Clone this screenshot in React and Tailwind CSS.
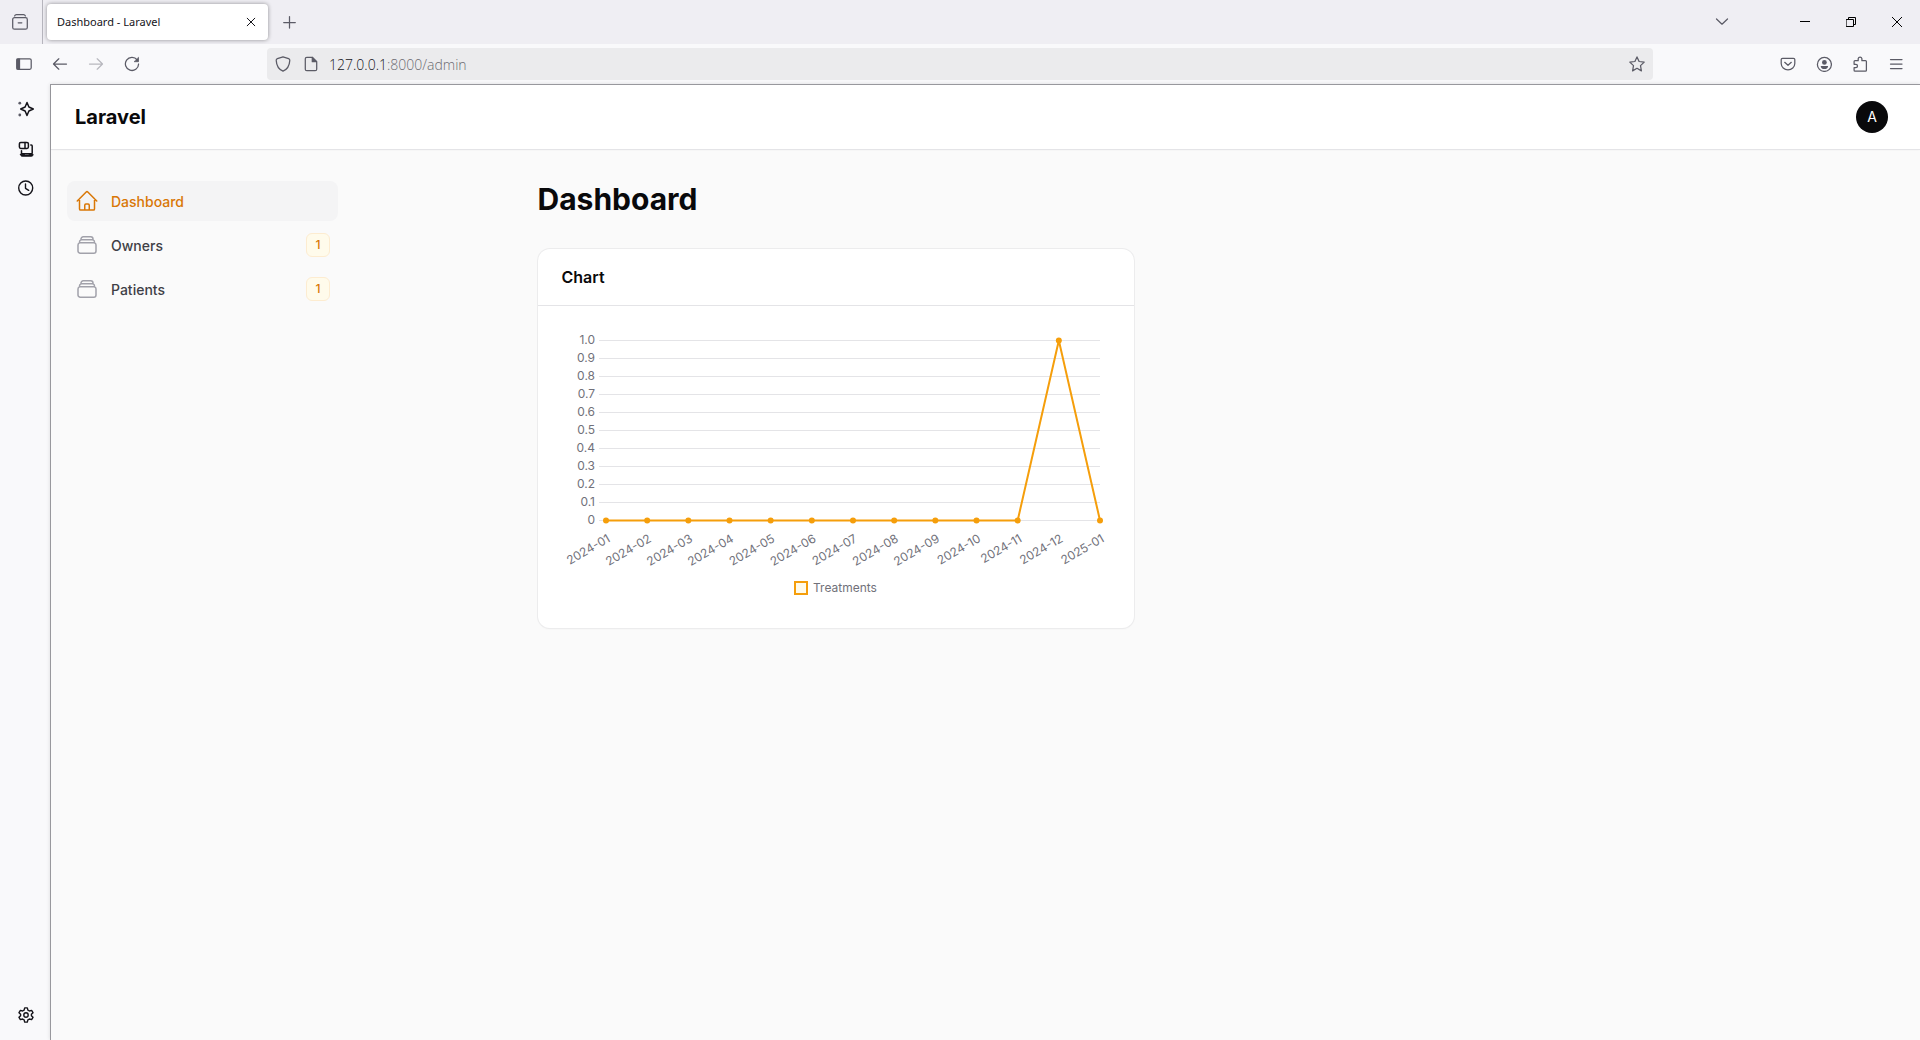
import React from "react";

function Icon({ children, className = "size-4", box = "0 0 16 16", strokeWidth = 1.25 }) {
  return (
    <svg
      viewBox={box}
      className={className}
      fill="none"
      stroke="currentColor"
      strokeWidth={strokeWidth}
      strokeLinecap="round"
      strokeLinejoin="round"
      aria-hidden="true"
    >
      {children}
    </svg>
  );
}

function TabStrip() {
  return (
    <div className="flex h-11 items-center bg-[#efeef3] text-[#5b5b66]">
      <div className="flex h-full w-[43px] items-center border-r border-[#b6b5bd] pl-3">
        <button aria-label="Firefox View" className="grid size-4 place-items-center">
          <Icon>
            <path d="M2.6 1.9C3 1 3.6.7 4.4.7h7.2c.8 0 1.4.3 1.8 1.2" />
            <rect x=".7" y="3.7" width="14.6" height="11.5" rx="1.8" />
            <path d="M6.2 8.8h3.6" />
          </Icon>
        </button>
      </div>
      <div className="ml-1 flex h-9 w-[221px] items-center justify-between rounded bg-white pr-[9px] pl-[10px] shadow-[0_0_4px_rgba(0,0,0,0.4)]">
        <span className="font-['Noto_Sans',sans-serif] text-[11px] text-[#15141a]">Dashboard - Laravel</span>
        <button aria-label="Close tab" className="grid size-4 place-items-center text-[#15141a]">
          <Icon className="size-[10px]" box="0 0 10 10" strokeWidth={1}>
            <path d="m1.200 1.200 7.600 7.600M8.800 1.200 1.200 8.800" />
          </Icon>
        </button>
      </div>
      <button aria-label="New tab" className="ml-[13px] grid size-4 place-items-center">
        <Icon>
          <path d="M8.500 2.500v11.500M2.700 8.500h11.600" />
        </Icon>
      </button>
      <div className="grow" />
      <button aria-label="List all tabs" className="mr-[52px] grid size-4 place-items-center">
        <Icon>
          <path d="m2.500 5 5.500 5.200L13.500 5" />
        </Icon>
      </button>
      <div className="flex text-black">
        <button aria-label="Minimize" className="grid h-11 w-[46px] place-items-center">
          <Icon className="size-[10px]" box="0 0 10 10" strokeWidth={1}>
            <path d="M0 4.500h10" />
          </Icon>
        </button>
        <button aria-label="Restore" className="grid h-11 w-[46px] place-items-center">
          <Icon className="size-[10px]" box="0 0 10 10" strokeWidth={1}>
            <path d="M.5 2.500h7v7h-7zM2.500 2.500v-2h7v7h-2" />
          </Icon>
        </button>
        <button aria-label="Close window" className="grid h-11 w-[46px] place-items-center">
          <Icon className="size-[10px]" box="0 0 10 10" strokeWidth={1}>
            <path d="m.3.3 9.400 9.400M9.700.3.3 9.700" />
          </Icon>
        </button>
      </div>
    </div>
  );
}

function ToolButton({ label, children, muted }) {
  return (
    <button
      aria-label={label}
      className={muted ? "grid h-10 w-9 place-items-center text-[#b8b8be]" : "grid h-10 w-9 place-items-center text-[#5b5b66]"}
    >
      <Icon>{children}</Icon>
    </button>
  );
}

function Toolbar() {
  return (
    <div className="flex h-10 items-center bg-[#f9f9fb] px-[6px]">
      <ToolButton label="Sidebar">
        <rect x=".8" y="2.800" width="14.400" height="10.500" rx="1.500" />
        <path d="M1 3h2.500v10H1z" fill="currentColor" />
      </ToolButton>
      <ToolButton label="Back">
        <path d="M14.500 8H1.600M6.800 2.800 1.500 8l5.300 5.200" />
      </ToolButton>
      <ToolButton label="Forward" muted>
        <path d="M1.500 8h12.900M9.200 2.800 14.500 8l-5.300 5.200" />
      </ToolButton>
      <ToolButton label="Reload">
        <path d="M13.200 3.800A6.600 6.600 0 1 0 14.600 8" />
        <path d="M14.500 1.700v4h-4z" fill="currentColor" strokeWidth=".8" />
      </ToolButton>
      <div className="mx-[117px] flex h-8 grow items-center rounded bg-[#ebebed] pr-2 pl-2 text-[#5b5b66]">
        <button aria-label="Tracking protection" className="grid size-4 place-items-center">
          <Icon>
            <path d="M8 .8 13.600 2.700c.8.3 1.300.8 1.200 1.700C14.500 9.500 12.500 13.300 8 15.200 3.500 13.300 1.500 9.500 1.200 4.400c-.1-.9.400-1.400 1.200-1.700z" />
          </Icon>
        </button>
        <button aria-label="Site information" className="ml-3 grid size-4 place-items-center">
          <Icon>
            <path d="M3.800 1.300h5.400l4.500 4.500v7.400c0 .9-.6 1.500-1.500 1.500H3.800c-.9 0-1.500-.6-1.500-1.500V2.800c0-.9.600-1.500 1.500-1.500z" />
            <path d="M9.300 1.500v4.200h4.200z" fill="currentColor" />
          </Icon>
        </button>
        <button aria-label="Edit address" className="ml-[10px] grow pt-[2px] text-left font-['Open_Sans',sans-serif] text-sm font-light text-[#6c6c72]">
          <span className="text-[#15141a]">127.0.0.1</span>:8000/admin
        </button>
        <button aria-label="Bookmark this page" className="grid size-4 place-items-center">
          <Icon>
            <path d="m8 .9 2.100 4.600 5.100.6-3.700 3.500.9 5.300L8 12.300l-4.400 2.600.9-5.300L.8 6.100l5.100-.6z" />
          </Icon>
        </button>
      </div>
      <ToolButton label="Save to Pocket">
        <path d="M2.500 2.300h11c.8 0 1.300.5 1.300 1.300v4a6.800 6.200 0 0 1-13.600 0v-4c0-.8.500-1.300 1.300-1.300z" />
        <path d="m4.700 6.300 3.300 3 3.300-3" />
      </ToolButton>
      <ToolButton label="Account">
        <circle cx="8.400" cy="8.400" r="7" />
        <circle cx="8.400" cy="6.400" r="2.400" fill="currentColor" stroke="none" />
        <path d="M4.700 9.900h7.400c0 2-1.400 3.200-3.700 3.200s-3.700-1.200-3.700-3.200z" fill="currentColor" stroke="none" />
      </ToolButton>
      <ToolButton label="Extensions">
        <path d="M3 4.700h3.200V2.600a1.900 1.900 0 0 1 3.700 0v2.100h3.600c.5 0 .9.400.9.900v8.600c0 .5-.4.900-.9.900H3c-.5 0-.9-.4-.9-.9v-2.500h1.700a1.700 1.700 0 0 0 0-3.400H2.100V5.600c0-.5.400-.9.900-.9z" />
      </ToolButton>
      <ToolButton label="Menu">
        <path d="M2.500 3.500h11.500M2.500 8h11.500M2.500 12.500h11.500" />
      </ToolButton>
    </div>
  );
}

function Rail() {
  return (
    <div className="flex w-[50px] shrink-0 flex-col items-center bg-[#f9f9fb] py-[17px] pl-[2px] text-[#15141a]">
      <button aria-label="AI chatbot" className="grid size-4 place-items-center">
        <Icon strokeWidth={1.5}>
          <path d="M9 1.500 10.900 6 15.300 8l-4.400 2L9 14.500 7.100 10 2.700 8l4.400-2z" />
          <circle cx="1.800" cy="2.200" r="1.400" fill="#5b5b66" stroke="none" />
          <circle cx="1.800" cy="14" r="1.400" fill="#5b5b66" stroke="none" />
        </Icon>
      </button>
      <button aria-label="Tabs from other devices" className="mt-6 grid size-4 place-items-center">
        <Icon strokeWidth={1.500}>
          <rect x="1.400" y="1.400" width="9" height="6" rx="1.400" />
          <path d="M7 1.600v5.600M12.800 4h.5c.5 0 .9.400.9.900v7.300M3.500 9.800v2.400c0 .4.300.6.600.6h9.500" />
          <path d="M2.600 13.300h3.700l.8.800h3.300l.8-.8h3.900c0 1.200-.5 1.900-1.500 1.900H4.100c-1 0-1.500-.7-1.500-1.900z" fill="currentColor" strokeWidth="1" />
        </Icon>
      </button>
      <button aria-label="History" className="mt-[23px] grid size-4 place-items-center">
        <Icon strokeWidth={1.400}>
          <circle cx="7.700" cy="8" r="7" />
          <path d="M7.500 4v4.300l3.200 2" />
        </Icon>
      </button>
      <button aria-label="Customize sidebar" className="mt-auto grid size-4 place-items-center">
        <Icon strokeWidth={1.400}>
          <path d="M6.700.9h2.600l.6 2.200 1.500.9 2.200-.6 1.400 2.300-1.600 1.600v1.400l1.600 1.600-1.400 2.300-2.200-.6-1.500.9-.6 2.200H6.700l-.6-2.200-1.500-.9-2.200.6L1 10.300l1.600-1.600V7.300L1 5.700l1.400-2.300 2.200.6 1.500-.9z" />
          <circle cx="8" cy="8" r="2.200" />
        </Icon>
      </button>
    </div>
  );
}

const HOME =
  "m2.25 12 8.954-8.955c.44-.439 1.152-.439 1.591 0L21.75 12M4.5 9.75v10.125c0 .621.504 1.125 1.125 1.125H9.75v-4.875c0-.621.504-1.125 1.125-1.125h2.25c.621 0 1.125.504 1.125 1.125V21h4.125c.621 0 1.125-.504 1.125-1.125V9.75M8.25 21h8.25";
const STACK =
  "M6 6.878V6a2.25 2.25 0 0 1 2.25-2.25h7.5A2.25 2.25 0 0 1 18 6v.878m-12 0c.235-.083.487-.128.75-.128h10.5c.263 0 .515.045.75.128m-12 0A2.25 2.25 0 0 0 4.5 9v.878m13.5-3A2.25 2.25 0 0 1 19.5 9v.878m0 0a2.246 2.246 0 0 0-.75-.128H5.25c-.263 0-.515.045-.75.128m15 0A2.25 2.25 0 0 1 21 12v6a2.25 2.25 0 0 1-2.25 2.25H5.25A2.25 2.25 0 0 1 3 18v-6c0-.98.626-1.813 1.5-2.122";

function NavItem({ label, icon, badge, active }) {
  return (
    <li>
      <a
        href="#"
        className={
          active
            ? "flex h-10 items-center gap-3 rounded-lg bg-[#f4f4f5] px-2 text-[#d97706]"
            : "flex h-10 items-center gap-3 rounded-lg px-2 text-[#3f3f46]"
        }
      >
        <span className={active ? "text-[#d97706]" : "text-[#a1a1aa]"}>
          <Icon className="size-6" box="0 0 24 24" strokeWidth={1.5}>
            <path d={icon} />
          </Icon>
        </span>
        <span className="grow pt-px text-sm font-medium">{label}</span>
        {badge && (
          <span className="grid size-6 place-items-center rounded-md border border-[#fdecd0] bg-[#fffbeb] text-xs font-medium text-[#d97706]">
            {badge}
          </span>
        )}
      </a>
    </li>
  );
}

const POINTS = [
  ["2024-01", 0],
  ["2024-02", 0],
  ["2024-03", 0],
  ["2024-04", 0],
  ["2024-05", 0],
  ["2024-06", 0],
  ["2024-07", 0],
  ["2024-08", 0],
  ["2024-09", 0],
  ["2024-10", 0],
  ["2024-11", 0],
  ["2024-12", 1],
  ["2025-01", 0],
];
const TICKS = ["1.0", "0.9", "0.8", "0.7", "0.6", "0.5", "0.4", "0.3", "0.2", "0.1", "0"];

const LEFT = 44;
const RIGHT = 538;
const TOP = 10;
const PLOT = 180;
const px = (i) => LEFT + ((RIGHT - LEFT) * i) / (POINTS.length - 1);
const py = (v) => TOP + PLOT * (1 - v);

function Chart() {
  return (
    <svg viewBox="0 0 548 274" className="block h-auto w-full font-[Inter,sans-serif] text-xs" role="img" aria-label="Treatments per month">
      {TICKS.map((t, i) => (
        <g key={t}>
          <rect x="37" y={TOP + i * 18} width={RIGHT - 37} height="1" fill="#e4e4e7" shapeRendering="crispEdges" />
          <text x="33" y={TOP + i * 18 + 4} textAnchor="end" fill="#71717a">
            {t}
          </text>
        </g>
      ))}
      <polyline
        points={POINTS.map(([, v], i) => `${px(i)},${py(v) + 0.5}`).join(" ")}
        fill="none"
        stroke="#f59e0b"
        strokeWidth="2"
        strokeLinejoin="round"
      />
      {POINTS.map(([m, v], i) => (
        <g key={m}>
          <circle cx={px(i)} cy={py(v) + 0.5} r="3" fill="#f59e0b" />
          <text textAnchor="end" fill="#71717a" transform={`translate(${px(i) + 5} 211) rotate(-30)`}>
            {m}
          </text>
        </g>
      ))}
      <rect x="233" y="252" width="12" height="12" fill="#fffbeb" stroke="#f59e0b" strokeWidth="2" />
      <text x="251" y="262" fill="#71717a">
        Treatments
      </text>
    </svg>
  );
}

export default function App() {
  return (
    <div className="flex min-h-screen flex-col">
      <TabStrip />
      <Toolbar />
      <div className="flex grow bg-[#f9f9fb]">
        <Rail />
        <div className="flex min-w-0 grow flex-col border-t border-l border-[#98989d] bg-[#fafafa] font-[Inter,sans-serif] text-[#09090b] shadow-[0_0_4px_rgba(0,0,0,0.12)]">
          <header className="flex h-16 items-center justify-between bg-white pr-8 pl-6 shadow-[0_1px_0_#e4e4e7,0_1px_2px_rgba(0,0,0,0.05)]">
            <a href="#" className="text-xl font-bold">
              Laravel
            </a>
            <button aria-label="User menu" className="grid size-8 place-items-center rounded-full bg-[#09090b] text-sm text-white">
              A
            </button>
          </header>
          <div className="flex grow">
            <nav className="w-80 shrink-0 py-8 pr-[33px] pl-4">
              <ul className="flex flex-col gap-1">
                <NavItem label="Dashboard" icon={HOME} active />
                <NavItem label="Owners" icon={STACK} badge="1" />
                <NavItem label="Patients" icon={STACK} badge="1" />
              </ul>
            </nav>
            <main className="mx-auto w-full max-w-7xl min-w-0 px-8 py-8">
              <h1 className="text-3xl font-bold">Dashboard</h1>
              <div className="mt-8 grid grid-cols-2 gap-6">
                <section className="rounded-xl bg-white shadow-[0_0_0_1px_#ececed,0_1px_2px_rgba(0,0,0,0.05)]">
                  <h2 className="px-6 py-4 text-base font-semibold">Chart</h2>
                  <div className="border-t border-[#e4e4e7] p-6">
                    <Chart />
                  </div>
                </section>
              </div>
            </main>
          </div>
        </div>
      </div>
    </div>
  );
}
